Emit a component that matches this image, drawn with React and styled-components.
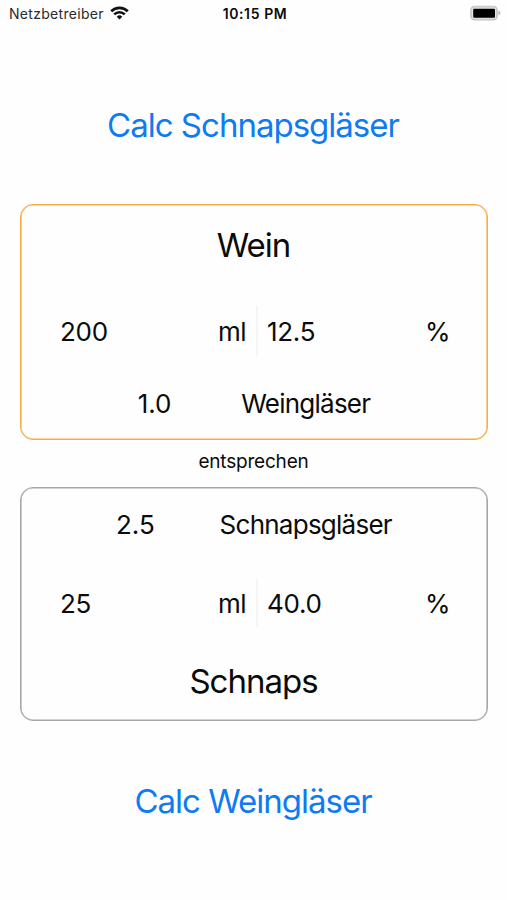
import React, { useState } from "react";
import styled, { createGlobalStyle } from "styled-components";

const GlobalStyle = createGlobalStyle`
  body {
    margin: 0;
    background: #fefefe;
  }

  * {
    box-sizing: border-box;
  }
`;

const Screen = styled.div`
  display: flex;
  flex-direction: column;
  height: 900px;
  font-family: Inter, "Liberation Sans", sans-serif;
  color: #0b0b0b;
  background: #fefefe;
`;

const StatusBar = styled.header`
  display: grid;
  grid-template-columns: 1fr auto 1fr;
  align-items: center;
  height: 26px;
  padding: 0 6px 0 9px;
  font-size: 14px;
`;

const Carrier = styled.div`
  display: flex;
  align-items: center;
  gap: 6px;
  letter-spacing: 0.3px;
  color: #2a2a2a;
`;

const Time = styled.div`
  font-weight: 600;
  letter-spacing: 0.6px;
`;

const Battery = styled.div`
  display: flex;
  justify-content: flex-end;
`;

const CalcButton = styled.button`
  height: ${(props) => props.$height}px;
  margin-top: ${(props) => props.$offset || 0}px;
  padding: 0 1px 0 0;
  border: none;
  background: none;
  font-family: inherit;
  font-size: 33px;
  letter-spacing: -1px;
  color: #0f7bf2;
  cursor: pointer;
`;

const Card = styled.section`
  display: flex;
  flex-direction: column;
  height: ${(props) => props.$height}px;
  margin: 0 19px 0 20px;
  padding-top: ${(props) => props.$top || 0}px;
  border: 1px solid ${(props) => props.$color};
  border-radius: 13px;
  box-shadow: inset 0 0 0 0.6px ${(props) => props.$color};
`;

const Title = styled.h1`
  display: flex;
  align-items: center;
  justify-content: center;
  height: ${(props) => props.$height}px;
  margin: 0;
  padding-right: 1px;
  font-size: 33px;
  font-weight: 400;
  letter-spacing: -1px;
`;

const FieldRow = styled.div`
  display: flex;
  align-items: center;
  height: ${(props) => props.$height}px;
  padding: 0 37px 0 39px;
  font-size: 26px;
`;

const Field = styled.label`
  display: flex;
  justify-content: space-between;
  width: ${(props) => props.$width}px;
`;

const Input = styled.input`
  width: 110px;
  padding: 0;
  border: none;
  outline: none;
  background: none;
  font: inherit;
  letter-spacing: -0.3px;
  color: inherit;
`;

const Unit = styled.span`
  letter-spacing: -0.5px;
`;

const Divider = styled.div`
  width: 2px;
  height: ${(props) => props.$height}px;
  margin: 0 9px 0 10px;
  background: #f5f5f5;
`;

const Result = styled.div`
  display: flex;
  align-items: center;
  justify-content: center;
  gap: ${(props) => props.$gap}px;
  height: ${(props) => props.$height}px;
  font-size: 26px;
  letter-spacing: -0.75px;
`;

const Amount = styled.span`
  letter-spacing: -0.1px;
`;

const Caption = styled.div`
  display: flex;
  align-items: center;
  justify-content: center;
  height: 47px;
  padding-bottom: 5px;
  font-size: 19px;
  letter-spacing: -0.2px;
`;

function WifiIcon() {
  return (
    <svg width="19" height="14" viewBox="0 0 19 14" fill="none" stroke="#111">
      <path d="M1.2 5.2a11.8 11.8 0 0 1 16.6 0" strokeWidth="2.7" />
      <path d="M4.2 8.4a7.5 7.5 0 0 1 10.6 0" strokeWidth="2.4" />
      <path d="M9.5 13.4 6.7 10.7a4 4 0 0 1 5.6 0z" fill="#111" stroke="none" />
    </svg>
  );
}

function BatteryIcon() {
  return (
    <svg width="31" height="16" viewBox="0 0 31 16">
      <rect x="1" y="1.6" width="26" height="13" rx="3.5" fill="#e6e6e6" stroke="#c8c8c8" strokeWidth="1.8" />
      <rect x="3.2" y="3.7" width="21.8" height="9" rx="1" fill="#000" />
      <path d="M28.5 5.8c2.4.7 2.4 3.8 0 4.5z" fill="#b5b5b5" />
    </svg>
  );
}

function DrinkFields({ drink, onChange, height, line }) {
  return (
    <FieldRow $height={height}>
      <Field $width={186}>
        <Input value={drink.ml} onChange={(e) => onChange({ ...drink, ml: e.target.value })} />
        <Unit>ml</Unit>
      </Field>
      <Divider $height={line} />
      <Field $width={183}>
        <Input value={drink.percent} onChange={(e) => onChange({ ...drink, percent: e.target.value })} />
        <Unit>%</Unit>
      </Field>
    </FieldRow>
  );
}

const alcohol = (drink) => Number(drink.ml) * Number(drink.percent);

export default function App() {
  const [wine, setWine] = useState({ ml: "200", percent: "12.5" });
  const [schnaps, setSchnaps] = useState({ ml: "25", percent: "40.0" });
  const [wineGlasses, setWineGlasses] = useState(1);
  const [schnapsGlasses, setSchnapsGlasses] = useState(2.5);

  const calcSchnaps = () => {
    setSchnapsGlasses((wineGlasses * alcohol(wine)) / alcohol(schnaps));
  };

  const calcWine = () => {
    setWineGlasses((schnapsGlasses * alcohol(schnaps)) / alcohol(wine));
  };

  return (
    <>
      <GlobalStyle />
      <Screen>
        <StatusBar>
          <Carrier>
            Netzbetreiber <WifiIcon />
          </Carrier>
          <Time>10:15 PM</Time>
          <Battery>
            <BatteryIcon />
          </Battery>
        </StatusBar>

        <CalcButton $height={158} $offset={20} onClick={calcSchnaps}>
          Calc Schnapsgläser
        </CalcButton>

        <Card $height={236} $color="#f5ac45">
          <Title $height={80}>Wein</Title>
          <DrinkFields drink={wine} onChange={setWine} height={92} line={50} />
          <Result $gap={70} $height={52}>
            <Amount>{wineGlasses.toFixed(1)}</Amount>
            <span>Weingläser</span>
          </Result>
        </Card>

        <Caption>entsprechen</Caption>

        <Card $height={234} $top={8} $color="#a6a6a6">
          <Result $gap={65} $height={56}>
            <Amount>{schnapsGlasses.toFixed(1)}</Amount>
            <span>Schnapsgläser</span>
          </Result>
          <DrinkFields drink={schnaps} onChange={setSchnaps} height={102} line={48} />
          <Title $height={54}>Schnaps</Title>
        </Card>

        <CalcButton $height={160} onClick={calcWine}>
          Calc Weingläser
        </CalcButton>
      </Screen>
    </>
  );
}
